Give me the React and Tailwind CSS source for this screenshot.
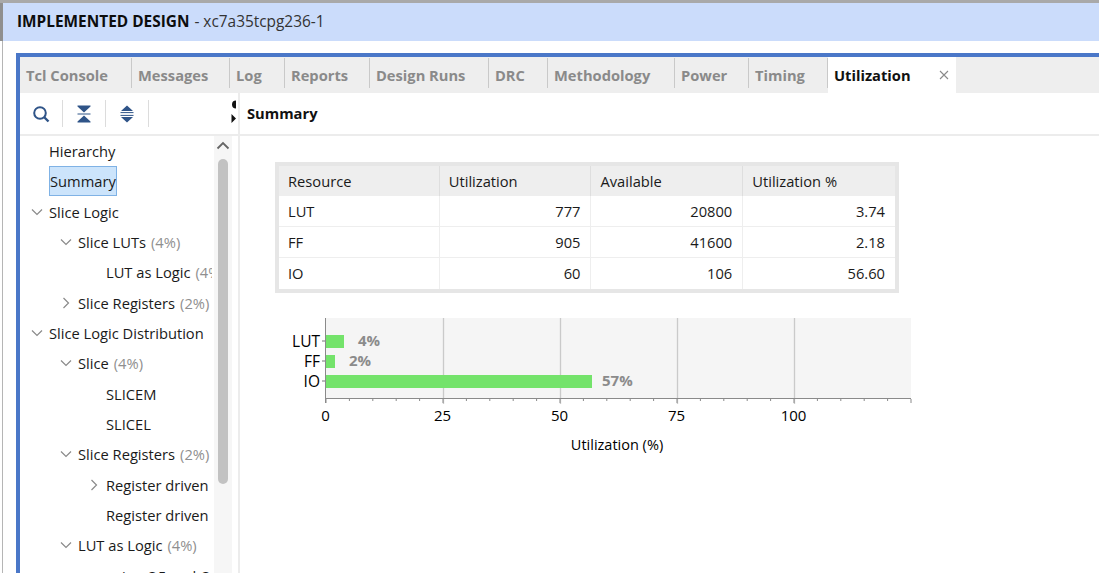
import React from "react";

const tabs = [
  ["Tcl Console", "w-[112px]"],
  ["Messages", "w-[98px]"],
  ["Log", "w-[55px]"],
  ["Reports", "w-[85px]"],
  ["Design Runs", "w-[119px]"],
  ["DRC", "w-[59px]"],
  ["Methodology", "w-[127px]"],
  ["Power", "w-[74px]"],
  ["Timing", "w-[79px]"],
];

function Chevron({ dir }) {
  return (
    <svg width="12" height="12" viewBox="0 0 12 12" className="shrink-0">
      <path
        d={dir === "down" ? "M1 3.5 L6 8.5 L11 3.5" : "M3.5 1 L8.5 6 L3.5 11"}
        fill="none"
        stroke="#8a8a8a"
        strokeWidth="1.2"
      />
    </svg>
  );
}

const tree = [
  { t: "Hierarchy", i: 29 },
  { t: "Summary", i: 29, sel: true },
  { t: "Slice Logic", i: 29, c: "down" },
  { t: "Slice LUTs", p: "(4%)", i: 58, c: "down" },
  { t: "LUT as Logic", p: "(4%)", i: 86 },
  { t: "Slice Registers", p: "(2%)", i: 58, c: "right" },
  { t: "Slice Logic Distribution", i: 29, c: "down" },
  { t: "Slice", p: "(4%)", i: 58, c: "down" },
  { t: "SLICEM", i: 86 },
  { t: "SLICEL", i: 86 },
  { t: "Slice Registers", p: "(2%)", i: 58, c: "down" },
  { t: "Register driven from outside", i: 86, c: "right" },
  { t: "Register driven from within", i: 86 },
  { t: "LUT as Logic", p: "(4%)", i: 58, c: "down" },
  { t: "using O5 and O6", i: 86 },
];

const rows = [
  ["LUT", "777", "20800", "3.74"],
  ["FF", "905", "41600", "2.18"],
  ["IO", "60", "106", "56.60"],
];

function Chart() {
  const x = (v) => 1.5 + v * 4.68;
  const minor = [];
  for (let v = 0; v <= 125; v += 5) minor.push(v);
  const bars = [
    ["LUT", 7, 18, "4%", 33],
    ["FF", 27, 9, "2%", 24],
    ["IO", 47, 266, "57%", 277],
  ];
  return (
    <svg width="650" height="140" viewBox="-46 0 650 140" className="block overflow-visible">
      <rect x="1" y="0" width="585" height="80" fill="#f5f5f5" />
      {[25, 50, 75, 100].map((v) => (
        <line key={v} x1={x(v)} x2={x(v)} y1="0" y2="86" stroke="#cacaca" strokeWidth="1.3" />
      ))}
      {bars.map(([n, y, w, l, lx]) => (
        <g key={n}>
          <rect x="1" y={y + 10} width={w} height="13" fill="#74e36b" />
          <line x1="-3" x2="1" y1={y + 16} y2={y + 16} stroke="#777" />
          <text x="-5" y={y + 22} textAnchor="end" fontSize="15.5" fill="#000">{n}</text>
          <text x={lx} y={y + 21} fontSize="15" fontWeight="700" fill="#8b8b8b">{l}</text>
        </g>
      ))}
      <line x1="0.5" x2="0.5" y1="0" y2="85" stroke="#8a8a8a" />
      <line x1="0" x2="586" y1="80.5" y2="80.5" stroke="#8a8a8a" />
      {minor.map((v) => (
        <line key={v} x1={x(v) - 0.5} x2={x(v) - 0.5} y1="81" y2={v % 25 === 0 ? 85 : 83} stroke="#8a8a8a" />
      ))}
      {[0, 25, 50, 75, 100].map((v) => (
        <text key={v} x={x(v) - 1} y="103" textAnchor="middle" fontSize="15" fill="#000">{v}</text>
      ))}
      <text x="292" y="131.5" textAnchor="middle" fontSize="14.5" fill="#000">Utilization (%)</text>
    </svg>
  );
}

export default function App() {
  return (
    <div className="h-[573px] w-[1099px] overflow-hidden bg-white text-[#1a1a1a] font-['Open_Sans','Noto_Sans',sans-serif]">
      <div className="h-[3px] bg-[#a9a9a9]" />
      <div className="flex h-[38px] items-center border-l-[3px] border-[#8f8f8f] bg-[#cbdcfb] pl-[14px] text-[15.4px]">
        <span className="font-bold text-[#0d0d0d]">IMPLEMENTED DESIGN</span>
        <span className="ml-[5px] text-[#333]">- xc7a35tcpg236-1</span>
      </div>
      <div className="ml-[2px] h-[532px] border-l border-[#b5b5b5] pl-[13px] pt-[12px]">
        <div className="h-[600px] border-4 border-r-0 border-[#4a77c8]">
          <div className="flex h-[36px] bg-[#eeeeee] pt-[1px]">
            {tabs.map(([t, w]) => (
              <div key={t} className={`${w} flex h-[30px] items-center border-r border-[#c9c9c9] pl-[6px] pt-[4px] text-[14.7px] font-bold text-[#8a8a8a]`}>
                {t}
              </div>
            ))}
            <div className="-mt-[1px] flex h-[36px] w-[128px] items-center justify-between bg-white pl-[6px] pr-[7px] text-[14.7px] font-bold text-[#111]">
              Utilization
              <svg width="10" height="10" viewBox="0 0 10 10">
                <path d="M1 1 L9 9 M9 1 L1 9" stroke="#8a8a8a" strokeWidth="1.1" />
              </svg>
            </div>
          </div>
          <div className="flex h-[560px]">
            <div className="flex w-[220px] shrink-0 flex-col border-r-2 border-[#ececec]">
              <div className="relative flex h-[43px] shrink-0 items-center border-b-2 border-[#ececec] pl-[12px]">
                <svg width="18" height="18" viewBox="0 0 18 18">
                  <circle cx="8" cy="8" r="5.8" fill="none" stroke="#2f5488" strokeWidth="2" />
                  <path d="M12 12 L16.5 16.5" stroke="#2f5488" strokeWidth="2.4" />
                </svg>
                <div className="ml-[12px] h-[27px] w-px bg-[#dcdcdc]" />
                <svg width="14" height="18" viewBox="0 0 14 18" className="ml-[14px]">
                  <path d="M0.5 0.5 H13.5 V1.5 L7 7.5 L0.5 1.5 Z M0.5 17.5 H13.5 V16.5 L7 10.5 L0.5 16.5 Z" fill="#2f5488" />
                  <path d="M0.5 9 H13.5" stroke="#2f5488" strokeWidth="1" />
                </svg>
                <div className="ml-[14px] h-[27px] w-px bg-[#dcdcdc]" />
                <svg width="14" height="18" viewBox="0 0 14 18" className="ml-[14px]">
                  <path d="M7 0.5 L13 6 H1 Z M7 17.5 L13 12 H1 Z" fill="#2f5488" />
                  <path d="M0.5 7.6 H13.5 M0.5 10.4 H13.5" stroke="#2f5488" strokeWidth="1" />
                </svg>
                <div className="ml-[14px] h-[27px] w-px bg-[#dcdcdc]" />
                <svg width="6" height="24" viewBox="0 0 6 24" className="absolute right-[1px] top-[7px]">
                  <path d="M5 0.5 A4 4 0 0 0 5 8.5 Z M0.5 14 L5 18.5 L0.5 23 Z" fill="#111" />
                </svg>
              </div>
              <div className="flex min-h-0 flex-1 pr-[8px]">
                <div className="mr-[2px] w-[192px] shrink-0 overflow-hidden text-[14.7px]">
                  {tree.map((r, k) => (
                    <div key={k} className="relative flex h-[30.33px] items-center whitespace-nowrap" style={{ paddingLeft: r.i }}>
                      {r.c && (
                        <span className="absolute" style={{ left: r.i - 18, top: 9 }}>
                          <Chevron dir={r.c} />
                        </span>
                      )}
                      <span className={r.sel ? "flex h-[30px] items-center border border-[#7fb2e5] bg-[#cce4fb]" : ""}>{r.t}</span>
                      {r.p && <span className="ml-[5px] text-[#8f8f8f]">{r.p}</span>}
                    </div>
                  ))}
                </div>
                <div className="flex w-[18px] shrink-0 flex-col items-center bg-[#f6f6f6] pt-[5px]">
                  <svg width="14" height="9" viewBox="0 0 14 9">
                    <path d="M1.5 7.5 L7 2 L12.5 7.5" fill="none" stroke="#666" strokeWidth="1.8" />
                  </svg>
                  <div className="mt-[9px] h-[325px] w-[10px] rounded-[5px] bg-[#c2c2c2]" />
                </div>
              </div>
            </div>
            <div className="min-w-0 flex-1">
              <div className="flex h-[43px] items-center border-b-2 border-[#ececec] pl-[7px] text-[14.7px] font-bold text-[#111]">
                Summary
              </div>
              <div className="pl-[35px] pt-[26px]">
                <div className="w-[624px] border-4 border-[#e6e6e6] text-[14.7px]">
                  <div className="flex h-[30px] bg-[#eeeeee]">
                    {["Resource", "Utilization", "Available", "Utilization %"].map((h, k) => (
                      <div key={h} className={`${k === 0 ? "w-[161px]" : "w-[152px]"} flex items-center border-r border-[#dedede] pl-[9px] last:border-r-0`}>
                        {h}
                      </div>
                    ))}
                  </div>
                  {rows.map((r, i) => (
                    <div key={r[0]} className={`flex h-[31px] ${i < 2 ? "border-b border-[#eeeeee]" : ""}`}>
                      <div className="flex w-[161px] items-center border-r border-[#eeeeee] pl-[9px]">{r[0]}</div>
                      {r.slice(1).map((v, k) => (
                        <div key={k} className="flex w-[152px] items-center justify-end border-r border-[#eeeeee] pr-[10px] last:border-r-0">
                          {v}
                        </div>
                      ))}
                    </div>
                  ))}
                </div>
                <div className="ml-[4px] mt-[25px]">
                  <Chart />
                </div>
              </div>
            </div>
          </div>
        </div>
      </div>
    </div>
  );
}
